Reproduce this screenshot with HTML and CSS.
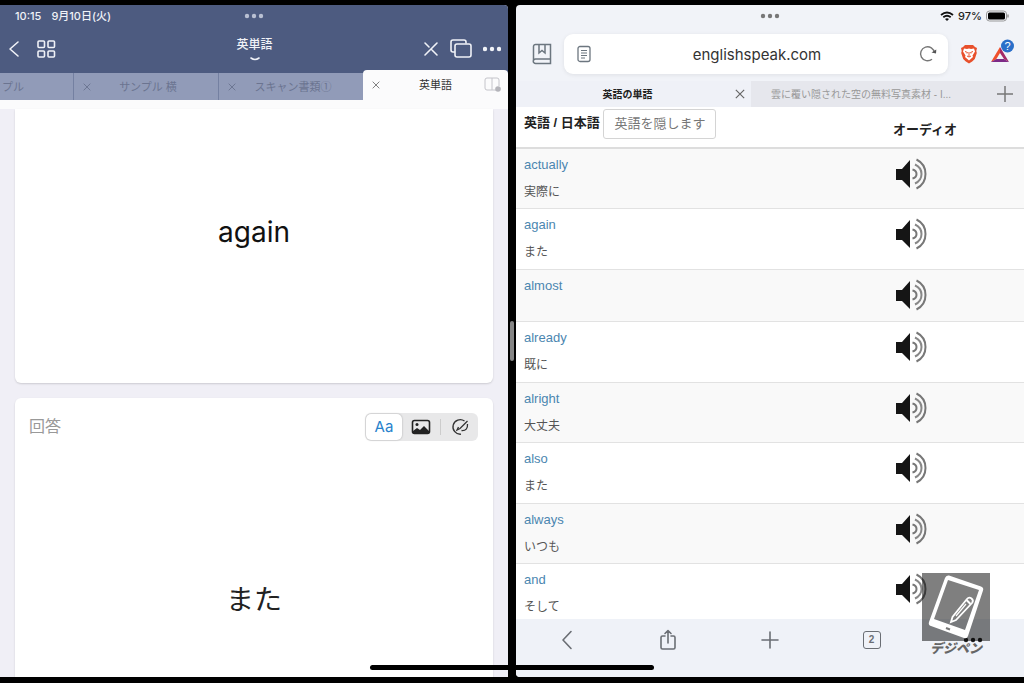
FILE: index.html
```
<!DOCTYPE HTML>
<html lang="ja">
<head>
<meta charset="utf-8">
<title>英単語</title>
<link rel="stylesheet" href="styles.css">
</head>
<body>
	<!-- 共通アイコン -->
	<svg class="defs" aria-hidden="true">
		<symbol id="speaker" viewBox="0 0 32 32">
			<path d="M1 11h6l8-9v28l-8-8H1z" fill="#151515"/>
			<g fill="none" stroke="#777" stroke-width="2">
				<path d="M17.500 11.500q4 1 4 4.500t-4 4.500"/>
				<path d="M20 6.500q6.500 3 6.500 9.500t-6.500 9.500" stroke="#888"/>
				<path d="M21.500 1.500q9 4.500 9 14.500t-9 14.500"/>
			</g>
		</symbol>
		<symbol id="cross" viewBox="0 0 12 12">
			<path d="M1 1l10 10M11 1L1 11" fill="none" stroke="currentColor" stroke-width="1.400"/>
		</symbol>
		<symbol id="dots" viewBox="0 0 20 6">
			<g fill="currentColor"><circle cx="3" cy="3" r="2.200"/><circle cx="10" cy="3" r="2.200"/><circle cx="17" cy="3" r="2.200"/></g>
		</symbol>
	</svg>

	<div class="screen">
		<!-- 左:単語カード -->
		<section class="pane notes">
			<div class="status">
				<span class="time">10:15</span>
				<span>9月10日(火)</span>
				<svg class="grip"><use href="#dots"/></svg>
			</div>
			<header class="nav">
				<div class="side">
					<button aria-label="戻る"><svg width="12" height="18" viewBox="0 0 12 18"><path d="M10 2L2 9l8 7" class="line"/></svg></button>
					<button aria-label="一覧"><svg width="20" height="20" viewBox="0 0 20 20"><g class="line"><rect x="2" y="2" width="6.500" height="6.500" rx="1"/><rect x="12" y="2" width="6.500" height="6.500" rx="1"/><rect x="2" y="12" width="6.500" height="6" rx="1"/><rect x="12" y="12" width="6.500" height="6" rx="1"/></g></svg></button>
				</div>
				<button class="title">英単語
					<svg width="10" height="6" viewBox="0 0 10 6"><path d="M1 3q4 3 8 0" class="line"/></svg>
				</button>
				<div class="side right">
					<button aria-label="ペン"><svg width="16" height="16" viewBox="0 0 16 16"><path d="M2 2l4 4M9 9l5 5M14 2L4 12l-2 2" class="line"/></svg></button>
					<button aria-label="ウィンドウ"><svg width="24" height="20" viewBox="0 0 24 20"><path d="M5.500 13H4a2 2 0 0 1-2-2V3a2 2 0 0 1 2-2h11a2 2 0 0 1 2 2v1" class="line"/><rect x="6" y="5" width="16" height="13" rx="2" class="line"/></svg></button>
					<button aria-label="その他"><svg width="18" height="6" viewBox="1 0 18 6"><use href="#dots" width="20" height="6"/></svg></button>
				</div>
			</header>
			<nav class="tabs">
				<div class="tab first"><a href="#">プル</a></div>
				<div class="tab"><button class="close" aria-label="閉じる"><svg><use href="#cross"/></svg></button><a href="#">サンプル 横</a></div>
				<div class="tab"><button class="close" aria-label="閉じる"><svg><use href="#cross"/></svg></button><a href="#">スキャン書類①</a></div>
				<div class="tab active"><button class="close" aria-label="閉じる"><svg><use href="#cross"/></svg></button><a href="#">英単語</a>
					<svg class="split" viewBox="0 0 18 16"><path d="M12 13H3a2 2 0 0 1-2-2V3a2 2 0 0 1 2-2h10a2 2 0 0 1 2 2v6M8 1v12" fill="none" stroke="#c4c4ca"/><circle cx="14" cy="12" r="2.800" fill="#b4b4ba"/></svg>
				</div>
			</nav>
			<div class="cards">
				<article class="card question">again</article>
				<article class="card answer">
					<div class="tools">
						<h2>回答</h2>
						<div class="modes">
							<button class="on">Aa</button>
							<button aria-label="画像"><svg width="20" height="16" viewBox="0 0 20 16"><rect x="1.500" y="1.500" width="17" height="13" rx="2" fill="none" stroke="#222" stroke-width="1.600"/><circle cx="6" cy="5.500" r="1.500" fill="#222"/><path d="M2 12l4-3 3 2 4-4 5 5v2H2z" fill="#222"/></svg></button>
							<button class="pen" aria-label="手書き"><svg width="18" height="18" viewBox="0 0 18 18"><path d="M13.500 3A7.300 7.300 0 1 0 10 16.200M16.500 3L9 10.500L6 12l1.500-3M16.500 6q.5 7-6 6.500" fill="none" stroke="#333" stroke-width="1.300"/></svg></button>
						</div>
					</div>
					<p>また</p>
				</article>
			</div>
		</section>

		<div class="divider"><span></span></div>

		<!-- 右:ブラウザ -->
		<section class="pane browser">
			<div class="status">
				<svg class="grip"><use href="#dots"/></svg>
				<svg width="14" height="10" viewBox="0 0 14 10"><g fill="none" stroke="#111" stroke-width="1.800"><path d="M1 4q6-5 12 0M3.300 6.300q3.700-3 7.400 0"/></g><path d="M5 8q2-1.500 4 0L7 10z" fill="#111"/></svg>
				<span>97%</span>
				<svg width="24" height="12" viewBox="0 0 24 12"><rect x=".5" y="1" width="20" height="10" rx="3" fill="none" stroke="#999"/><rect x="2" y="2.500" width="17" height="7" rx="1.500" fill="#000"/><path d="M22 4.500v3" stroke="#999" stroke-width="1.500"/></svg>
			</div>
			<div class="address">
				<button aria-label="ブックマーク"><svg width="20" height="22" viewBox="0 0 20 22"><g fill="none" stroke="#6c767f" stroke-width="1.500"><path d="M18.500 16H3.500a2.200 2.200 0 0 0 0 4.500h15zM1.500 18V3.500A2 2 0 0 1 3.500 1.500h15V16M7 2v8l3-2.500L13 10V2"/></g></svg></button>
				<div class="field">
					<svg width="14" height="18" viewBox="0 0 14 18"><rect x="1" y="1.500" width="12" height="15" rx="2" fill="none" stroke="#6c767f" stroke-width="1.300"/><path d="M4 5.500h6M4 8h6M4 10.500h6M4 13h4" stroke="#6c767f"/></svg>
					<input type="text" value="englishspeak.com" aria-label="アドレス">
					<button aria-label="再読み込み"><svg width="18" height="18" viewBox="0 0 18 18"><path d="M13 14.200A7 7 0 1 1 15.500 8" fill="none" stroke="#777" stroke-width="1.400"/><path d="M12.500 7.500l4.500 1 .3-4z" fill="#555"/></svg></button>
				</div>
				<button aria-label="Brave Shields"><svg width="18" height="20" viewBox="0 0 18 20"><path d="M5 1h8l2 2 2 1-.7 3 .5 2-2 6-2.600 2.500L9 19.500l-3.200-2L3.200 15l-2-6 .5-2L1 4l2-1z" fill="#e8502c"/><path d="M4 4.500l3 .5 2-.5 2 .5 3-.5 1 3-2.500 4 .5 1.500L9 16.500 5 13l.5-1.500L3 7.500z" fill="#fff"/><path d="M5 7.500l2.500 1-.5 1M13 7.500l-2.500 1 .5 1M9 8v4.500M7 12l2 1 2-1" fill="none" stroke="#e8502c"/></svg></button>
				<button aria-label="Brave Rewards"><svg width="24" height="26" viewBox="0 0 24 26"><path d="M10 8L1 23l5-2.500L10 14z" fill="#f0502c"/><path d="M1 23h18l-5-3H6.500z" fill="#7d2a87"/><path d="M10 8l9 15-5-3-4-6z" fill="#a32a66"/><circle cx="17.500" cy="7" r="6.500" fill="#2a6fc9"/><text x="17.500" y="11" class="badge">?</text></svg></button>
			</div>
			<nav class="webtabs">
				<div class="webtab active"><a href="#">英語の単語</a><button aria-label="タブを閉じる"><svg><use href="#cross"/></svg></button></div>
				<div class="webtab"><a href="#">雲に覆い隠された空の無料写真素材 - I...</a></div>
				<button class="add" aria-label="新しいタブ"><svg width="16" height="16" viewBox="0 0 16 16"><path d="M8 0v16M0 8h16" stroke="#777" stroke-width="1.500"/></svg></button>
			</nav>
			<main class="page">
				<table>
					<thead>
						<tr><th>英語 / 日本語 <button class="hide">英語を隠します</button></th><th class="audio">オーディオ</th></tr>
					</thead>
					<tbody>
						<tr><td><a href="#">actually</a><p>実際に</p></td><td><button aria-label="再生"><svg><use href="#speaker"/></svg></button></td></tr>
						<tr><td><a href="#">again</a><p>また</p></td><td><button aria-label="再生"><svg><use href="#speaker"/></svg></button></td></tr>
						<tr class="short"><td><a href="#">almost</a></td><td><button aria-label="再生"><svg><use href="#speaker"/></svg></button></td></tr>
						<tr><td><a href="#">already</a><p>既に</p></td><td><button aria-label="再生"><svg><use href="#speaker"/></svg></button></td></tr>
						<tr><td><a href="#">alright</a><p>大丈夫</p></td><td><button aria-label="再生"><svg><use href="#speaker"/></svg></button></td></tr>
						<tr><td><a href="#">also</a><p>また</p></td><td><button aria-label="再生"><svg><use href="#speaker"/></svg></button></td></tr>
						<tr><td><a href="#">always</a><p>いつも</p></td><td><button aria-label="再生"><svg><use href="#speaker"/></svg></button></td></tr>
						<tr><td><a href="#">and</a><p>そして</p></td><td><button aria-label="再生"><svg><use href="#speaker"/></svg></button></td></tr>
					</tbody>
				</table>
			</main>
			<footer class="toolbar">
				<button aria-label="戻る"><svg width="12" height="20" viewBox="0 0 12 20"><path d="M10 1.500L2 10l8 8.500" class="line"/></svg></button>
				<button aria-label="共有"><svg width="18" height="22" viewBox="0 0 18 22"><path d="M6 7H3.500A1.500 1.500 0 0 0 2 8.500v10A1.500 1.500 0 0 0 3.500 20h11a1.500 1.500 0 0 0 1.500-1.500v-10A1.500 1.500 0 0 0 14.500 7H12M9 14V2M6 4.500l3-3 3 3" class="line"/></svg></button>
				<button aria-label="新しいタブ"><svg width="18" height="18" viewBox="0 0 18 18"><path d="M9 1v16M1 9h16" class="line"/></svg></button>
				<button aria-label="タブ一覧"><span class="count">2</span></button>
				<button aria-label="メニュー"><svg class="grip"><use href="#dots"/></svg></button>
			</footer>
		</section>

		<!-- ロゴ -->
		<div class="logo">
			<svg viewBox="0 0 68 68">
				<path fill="#fff" fill-rule="evenodd" d="M27 2.500l32 11q3 1 2 4L46 63q-1 3-4 2L9 53q-3-1-2-4L23 5q1-3 4-2.500zM26 7L12 46l31 11 14-40z"/>
				<path d="M24 55l4 1.500" stroke="#777" stroke-width="2"/>
				<path d="M29 49l1.500-5L45 26q2-2.500 4.500-.5t.5 4.500L34 47z" fill="none" stroke="#fff" stroke-width="1.800"/>
				<path d="M34 43l10-12" stroke="#fff" stroke-width="1.200"/>
				<path d="M44.500 27l4 4" stroke="#fff" stroke-width="2"/>
			</svg>
			<span>デジペン</span>
		</div>
		<div class="home"></div>
	</div>
</body>
</html>
```
FILE: styles.css
```
* {
	box-sizing: border-box;
}
body {
	margin: 0;
	background: #000;
	color: #222;
	font: 12px/20px "Liberation Sans", "Noto Sans CJK JP", sans-serif;
}
button {
	display: flex;
	align-items: center;
	justify-content: center;
	padding: 0;
	border: 0;
	background: none;
	color: inherit;
	font: inherit;
}
a {
	color: inherit;
	text-decoration: none;
}
p, h2 {
	margin: 0;
}
svg {
	display: block;
	flex: none;
}
.defs {
	position: absolute;
	width: 0;
	height: 0;
}
.line {
	fill: none;
	stroke: currentColor;
	stroke-width: 1.6px;
	stroke-linecap: round;
	stroke-linejoin: round;
}

/* 画面全体 */
.screen {
	display: flex;
	position: relative;
	height: 100vh;
	padding: 5px 0 6px;
}
.pane {
	display: flex;
	flex: 1;
	flex-direction: column;
	min-width: 0;
	overflow: hidden;
}
.divider {
	display: flex;
	align-items: center;
	justify-content: center;
	width: 8px;
}
.divider span {
	width: 4px;
	height: 40px;
	border-radius: 2px;
	background: #858585;
}
.status {
	display: flex;
	position: relative;
	flex: none;
	align-items: center;
	height: 22px;
	font: 500 11px/22px Inter, "Noto Sans CJK JP", sans-serif;
}
.grip {
	width: 20px;
	height: 6px;
}
.status .grip {
	position: absolute;
	top: 8px;
	left: calc(50% - 10px);
}

/* 左側 */
.notes {
	border-radius: 0 4px 0 0;
	background: #f0eff6;
}
.notes .status {
	gap: 10px;
	padding-left: 15px;
	background: #4d5b80;
	color: #f0f2f7;
}
.notes .grip {
	color: #b9c0d2;
}
.nav {
	display: flex;
	flex: none;
	align-items: center;
	height: 46px;
	padding: 0 7px 2px 8px;
	background: #4d5b80;
	color: #f0f2f7;
}
.side {
	display: flex;
	flex: 1;
	align-items: center;
	gap: 16px;
}
.side.right {
	justify-content: flex-end;
	gap: 10px;
}
.title {
	flex-direction: column;
	padding-bottom: 2px;
	font-weight: 500;
}
.tabs {
	display: flex;
	flex: none;
	align-items: flex-end;
	justify-content: flex-end;
	height: 27px;
	background: #919bb8;
	color: #6b7490;
	font-size: 11px;
}
.tab {
	display: flex;
	position: relative;
	flex: none;
	align-items: center;
	justify-content: center;
	width: 145px;
	height: 27px;
	border-left: 1px solid #7480a1;
}
.tab.first {
	flex: 1;
	justify-content: flex-start;
	border: 0;
}
.tab a {
	padding-left: 4px;
}
.tab.first a {
	padding-left: 2px;
}
.tab svg {
	width: 8px;
	height: 8px;
}
.close {
	position: absolute;
	left: 9px;
}
.tab.active {
	height: 30px;
	border: 0;
	border-radius: 4px 4px 0 0;
	background: #fbfbfc;
	color: #333;
}
.tab.active a {
	padding: 0;
}
.active .close {
	color: #777;
}
.tab .split {
	position: absolute;
	right: 6px;
	width: 18px;
	height: 16px;
}
.cards {
	display: grid;
	flex: 1;
	grid-template-rows: 274fr 279fr;
	gap: 15px;
	padding: 0 15px;
	border-top: 9px solid #fbfbfc;
}
.card {
	min-height: 0;
	background: #fff;
	box-shadow: 0 1px 2px rgba(0, 0, 0, .15);
}
.question {
	display: flex;
	align-items: center;
	justify-content: center;
	padding-bottom: 28px;
	border-radius: 0 0 6px 6px;
	color: #111;
	font: 28px/32px Inter, sans-serif;
}
.answer {
	display: flex;
	flex-direction: column;
	border-radius: 6px 6px 0 0;
}
.answer p {
	margin: auto;
	padding-top: 84px;
	font-size: 28px;
}
.tools {
	display: flex;
	align-items: center;
	justify-content: space-between;
	padding: 15px 15px 0 14px;
}
.tools h2 {
	color: #999;
	font-size: 16px;
	font-weight: 400;
}
.modes {
	display: flex;
	align-items: center;
	height: 28px;
	border-radius: 6px;
	background: #e8e8e9;
}
.modes button {
	width: 38px;
	height: 26px;
}
.modes .on {
	margin-left: 1px;
	width: 36px;
	border-radius: 5px;
	background: #fff;
	box-shadow: 0 0 2px rgba(0, 0, 0, .3);
	color: #2782cc;
	font: 15px/20px Inter, sans-serif;
}
.modes .pen {
	height: 16px;
	border-left: 1px solid #ccc;
}

/* 右側 */
.browser {
	border-radius: 4px 0 0 4px;
	background: #f1f3f8;
}
.browser .status {
	justify-content: flex-end;
	gap: 4px;
	padding-right: 14px;
	color: #222;
}
.browser .grip {
	color: #777;
}
.address {
	display: flex;
	flex: none;
	align-items: center;
	gap: 12px;
	height: 54px;
	padding: 0 10px 0 16px;
}
.address > button:last-child {
	padding-bottom: 4px;
}
.field {
	display: flex;
	flex: 1;
	align-items: center;
	min-width: 0;
	height: 40px;
	padding: 0 11px 0 13px;
	border-radius: 9px;
	background: #fff;
	box-shadow: 0 1px 4px rgba(0, 0, 0, .08);
}
.field input {
	flex: 1;
	min-width: 0;
	padding: 2px 0 0 4px;
	border: 0;
	outline: 0;
	background: none;
	color: #333;
	font: 15px/20px Inter, sans-serif;
	text-align: center;
}
.badge {
	fill: #fff;
	font: 11px "Liberation Sans", sans-serif;
	text-anchor: middle;
}
.webtabs {
	display: flex;
	flex: none;
	height: 26px;
	background: #e6e7ed;
	font-size: 10px;
}
.webtab {
	display: flex;
	flex: 1;
	align-items: center;
	min-width: 0;
	color: #999;
}
.webtab a {
	flex: 1;
	overflow: hidden;
	padding: 2px 0 0 20px;
	white-space: nowrap;
}
.webtab.active {
	background: #eff1f7;
	color: #222;
	font-weight: 700;
}
.webtab.active a {
	padding-left: 4px;
	text-align: center;
}
.webtab svg {
	width: 10px;
	height: 10px;
	margin-right: 6px;
	color: #666;
}
.add {
	width: 38px;
}
.page {
	flex: 1;
	min-height: 0;
	overflow: hidden;
	background: #fff;
}
table {
	width: 100%;
	border-collapse: collapse;
	table-layout: fixed;
}
th, td {
	padding: 0 8px;
	text-align: left;
	vertical-align: top;
}
th {
	height: 41px;
	border-bottom: 2px solid #ddd;
	font-size: 13px;
	line-height: 32px;
}
th .hide {
	display: inline-flex;
	height: 30px;
	padding: 0 10px;
	border: 1px solid #d4d4d4;
	border-radius: 3px;
	color: #777;
	font-weight: 400;
	vertical-align: middle;
}
th.audio {
	width: 139px;
	padding-top: 7px;
}
tbody tr {
	height: 60px;
	border-bottom: 1px solid #e2e2e2;
}
tbody tr:nth-child(even) {
	height: 61px;
}
tbody tr.short {
	height: 52px;
}
tbody tr:nth-child(odd) {
	background: #f9f9f9;
}
tbody tr:nth-child(even) {
	background: #fff;
}
td {
	padding-top: 6px;
	color: #555;
}
td a {
	display: block;
	color: #4b86b0;
	font-size: 13px;
}
td p {
	padding-top: 7px;
}
td button {
	margin: 3px 0 0 2px;
}
td button svg {
	width: 32px;
	height: 32px;
}
.toolbar {
	display: flex;
	flex: none;
	height: 58px;
	padding-bottom: 17px;
	background: #eff2f8;
	color: #6a6e74;
}
.toolbar button {
	flex: 1;
}
.toolbar .grip {
	color: #222;
}
.count {
	width: 18px;
	height: 18px;
	border: 1px solid #6a6e74;
	border-radius: 3px;
	font: 700 10px/16px "Liberation Sans", sans-serif;
}

/* 右下のロゴとホームバー */
.logo {
	position: absolute;
	right: 34px;
	bottom: 26px;
	width: 68px;
	text-align: center;
}
.logo svg {
	width: 68px;
	height: 68px;
	background: rgba(0, 0, 0, .5);
}
.logo span {
	display: block;
	color: #666;
	font-size: 13px;
	font-style: italic;
	font-weight: 900;
	line-height: 16px;
}
.home {
	position: absolute;
	bottom: 13px;
	left: 50%;
	width: 284px;
	height: 5px;
	margin-left: -142px;
	border-radius: 3px;
	background: #000;
}
```
